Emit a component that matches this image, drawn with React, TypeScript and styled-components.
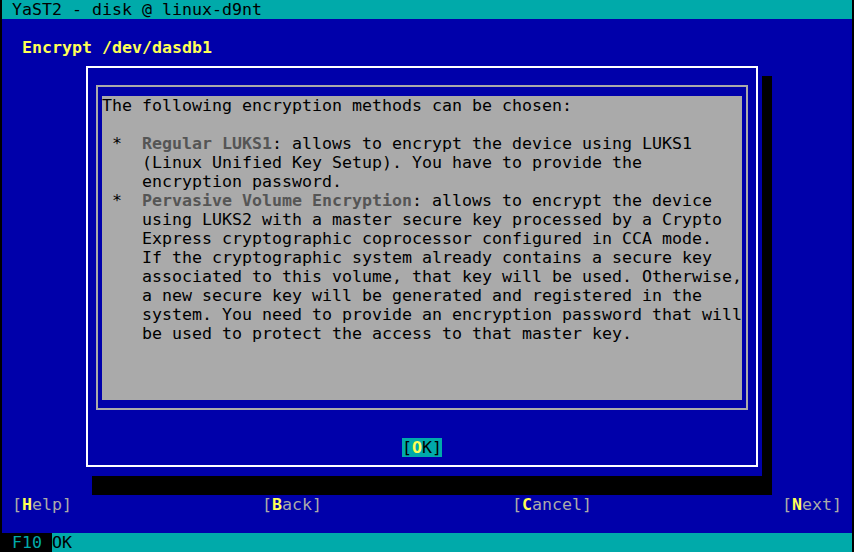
import React from "react";
import styled, { createGlobalStyle } from "styled-components";

const BLUE = "#0000aa";
const CYAN = "#00aaaa";
const GREY = "#aaaaaa";
const DARK = "#555555";
const YELLOW = "#ffff55";
const WHITE = "#ffffff";

const Global = createGlobalStyle`
  html, body { margin: 0; padding: 0; background: #000; }
  body { width: 854px; height: 552px; overflow: hidden; }
`;

const Screen = styled.div`
  margin-left: 2px;
  width: 850px;
  height: 552px;
  background: ${BLUE};
  display: flex;
  flex-direction: column;
  font-family: "DejaVu Sans Mono", "Liberation Mono", monospace;
  font-size: 16.61px;
  line-height: 19px;
  white-space: pre;
`;

const TitleBar = styled.div`
  height: 19px;
  background: ${CYAN};
  color: #000;
  padding-left: 10px;
`;

const Heading = styled.div`
  margin-top: 19px;
  height: 19px;
  padding-left: 20px;
  color: ${YELLOW};
  font-weight: bold;
`;

const DialogWindow = styled.div`
  margin-left: 80px;
  width: 680px;
  height: 419px;
  box-sizing: border-box;
  background: ${BLUE};
  box-shadow: 10px 19px 0 #000;
  padding: 9px 4px;
  display: flex;
`;

const DialogFrame = styled.div`
  flex: 1;
  border: 2px solid ${WHITE};
  display: flex;
  flex-direction: column;
  padding: 17px 8px 0 8px;
`;

const TextFrame = styled.div`
  border: 2px solid ${GREY};
  padding: 9px 4px 8px 4px;
`;

const TextArea = styled.div`
  background: ${GREY};
  height: 304px;
  color: #000;
`;

const Line = styled.div`
  height: 19px;
`;

const Label = styled.span`
  color: ${DARK};
  font-weight: bold;
`;

const ButtonRow = styled.div`
  margin-top: 28px;
  display: flex;
  justify-content: center;
`;

const OkButton = styled.span`
  background: ${CYAN};
  color: #000;
  height: 19px;
`;

const Hot = styled.span`
  color: ${YELLOW};
  font-weight: bold;
`;

const NavRow = styled.div`
  margin-top: 19px;
  height: 19px;
  padding: 0 10px;
  display: flex;
  justify-content: space-between;
  color: ${GREY};
`;

const Spacer = styled.div`
  height: 19px;
`;

const StatusBar = styled.div`
  height: 19px;
  background: ${CYAN};
  display: flex;
`;

const KeyName = styled.span`
  background: #000;
  color: ${CYAN};
`;

const KeyAction = styled.span`
  color: #000;
`;

const NavButton = ({ hot, rest }: { hot: string; rest: string }) => (
  <span>
    [<Hot>{hot}</Hot>
    {rest}]
  </span>
);

export default function App() {
  return (
    <>
      <Global />
      <Screen>
        <TitleBar>YaST2 - disk @ linux-d9nt</TitleBar>
        <Heading>Encrypt /dev/dasdb1</Heading>
        <DialogWindow>
          <DialogFrame>
            <TextFrame>
              <TextArea>
                <Line>The following encryption methods can be chosen:</Line>
                <Line> </Line>
                <Line>
                  {" *  "}
                  <Label>Regular LUKS1</Label>: allows to encrypt the device using LUKS1
                </Line>
                <Line>{"    (Linux Unified Key Setup). You have to provide the"}</Line>
                <Line>{"    encryption password."}</Line>
                <Line>
                  {" *  "}
                  <Label>Pervasive Volume Encryption</Label>: allows to encrypt the device
                </Line>
                <Line>{"    using LUKS2 with a master secure key processed by a Crypto"}</Line>
                <Line>{"    Express cryptographic coprocessor configured in CCA mode."}</Line>
                <Line>{"    If the cryptographic system already contains a secure key"}</Line>
                <Line>{"    associated to this volume, that key will be used. Otherwise,"}</Line>
                <Line>{"    a new secure key will be generated and registered in the"}</Line>
                <Line>{"    system. You need to provide an encryption password that will"}</Line>
                <Line>{"    be used to protect the access to that master key."}</Line>
              </TextArea>
            </TextFrame>
            <ButtonRow>
              <OkButton>
                [<Hot>O</Hot>K]
              </OkButton>
            </ButtonRow>
          </DialogFrame>
        </DialogWindow>
        <NavRow>
          <NavButton hot="H" rest="elp" />
          <NavButton hot="B" rest="ack" />
          <NavButton hot="C" rest="ancel" />
          <NavButton hot="N" rest="ext" />
        </NavRow>
        <Spacer />
        <StatusBar>
          <KeyName> F10 </KeyName>
          <KeyAction>OK</KeyAction>
        </StatusBar>
      </Screen>
    </>
  );
}
